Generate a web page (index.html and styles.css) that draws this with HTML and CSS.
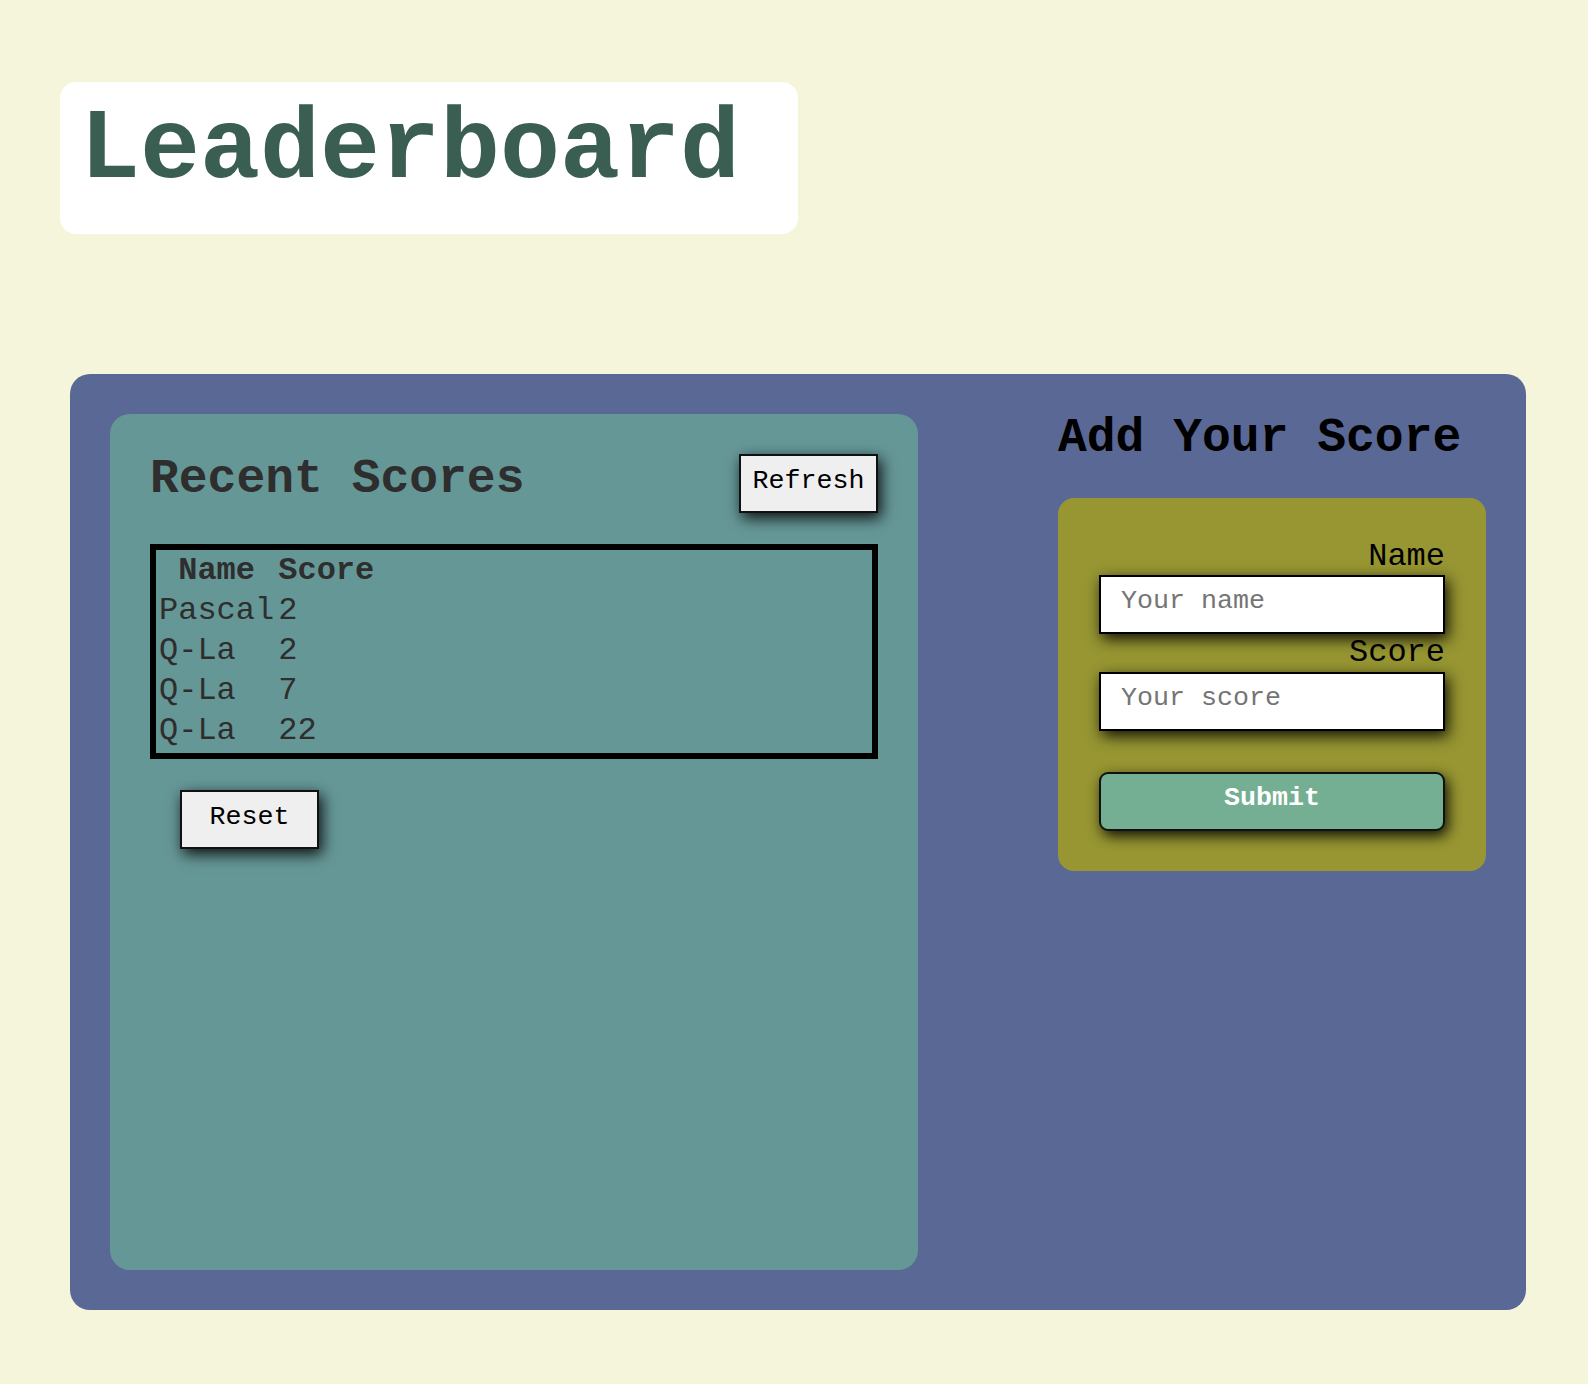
FILE: index.html
```html
<!DOCTYPE html>
<html lang="en">
<head>
<meta charset="utf-8">
<title>Leaderboard</title>
<link rel="stylesheet" href="styles.css">
</head>
<body>
  <header class="title-card">
    <h1 class="title">Leaderboard</h1>
  </header>

  <main class="board">
    <section class="recent">
      <div class="recent-head">
        <h2 class="recent-title">Recent Scores</h2>
        <button class="btn" type="button">Refresh</button>
      </div>
      <div class="scores-box">
        <table class="scores">
          <thead>
            <tr><th>Name</th><th>Score</th></tr>
          </thead>
          <tbody>
            <tr><td>Pascal</td><td>2</td></tr>
            <tr><td>Q-La</td><td>2</td></tr>
            <tr><td>Q-La</td><td>7</td></tr>
            <tr><td>Q-La</td><td>22</td></tr>
          </tbody>
        </table>
      </div>
      <button class="btn btn-reset" type="button">Reset</button>
    </section>

    <section class="add">
      <h2 class="add-title">Add Your Score</h2>
      <form class="add-form">
        <label class="field-label" for="name">Name</label>
        <input class="field" id="name" type="text" placeholder="Your name">
        <label class="field-label" for="score">Score</label>
        <input class="field" id="score" type="text" placeholder="Your score">
        <button class="submit" type="button">Submit</button>
      </form>
    </section>
  </main>
</body>
</html>
```

FILE: styles.css
```css
* {
  box-sizing: border-box;
}

body {
  margin: 0;
  background: #f5f5dc;
  font-family: "Courier New", "Nimbus Mono PS", "Nimbus Mono L", "FreeMono", "Liberation Mono", monospace;
  min-height: 1384px;
}

.title-card {
  margin: 82px 0 0 60px;
  width: 738px;
  height: 152px;
  background: #ffffff;
  border-radius: 16px;
  padding: 12px 0 0 20px;
}

.title {
  margin: 0;
  font-size: 100px;
  font-weight: bold;
  color: #3a5e52;
}

.board {
  margin: 140px 0 0 70px;
  width: 1456px;
  height: 936px;
  background: #5a6896;
  border-radius: 20px;
  padding: 40px;
  display: flex;
  justify-content: space-between;
}

.recent {
  width: 808px;
  background: #669797;
  border-radius: 20px;
  padding: 40px;
  color: #2e2e2e;
}

.recent-head {
  display: flex;
  justify-content: space-between;
  align-items: flex-start;
  height: 59px;
}

.recent-title {
  margin: 0;
  font-size: 48px;
  line-height: 50px;
  font-weight: bold;
}

.btn {
  width: 139px;
  height: 59px;
  padding: 10px 0 15px;
  line-height: 30px;
  font-family: inherit;
  font-size: 26.67px;
  color: #000;
  background: #efefef;
  border: 2px solid #111;
  border-radius: 0;
  box-shadow: 3px 5px 14px rgba(0, 0, 0, 0.9);
}

.btn-reset {
  display: block;
  margin: 31px 0 0 30px;
}

.scores-box {
  margin-top: 31px;
  height: 215px;
  border: 6px solid #000;
}

.scores {
  font-size: 32px;
  color: #2e2e2e;
}

.scores th,
.scores td {
  padding: 1px;
  line-height: 36px;
}

.scores td {
  text-align: left;
}

.add {
  width: 428px;
}

.add-title {
  margin: -1px 0 0;
  font-size: 48px;
  line-height: 50px;
  font-weight: bold;
  color: #000;
}

.add-form {
  margin-top: 35px;
  background: #979632;
  border-radius: 16px;
  padding: 40px 41px;
  display: flex;
  flex-direction: column;
}

.field-label {
  text-align: right;
  font-size: 32px;
  color: #000;
}

.field {
  height: 59px;
  padding: 9px 20px 16px;
  line-height: 30px;
  font-family: inherit;
  font-size: 26.67px;
  background: #fff;
  border: 2px solid #000;
  border-radius: 0;
  box-shadow: 3px 5px 14px rgba(0, 0, 0, 0.9);
}

.field::placeholder {
  color: #757575;
}

.field + .field-label {
  margin-bottom: 1px;
}

.submit {
  margin-top: 41px;
  height: 59px;
  padding: 9px 0 16px;
  line-height: 30px;
  font-family: inherit;
  font-size: 26.67px;
  font-weight: bold;
  color: #fff;
  background: #74af93;
  border: 2px solid #111;
  border-radius: 9px;
  box-shadow: 3px 5px 14px rgba(0, 0, 0, 0.9);
}
```
